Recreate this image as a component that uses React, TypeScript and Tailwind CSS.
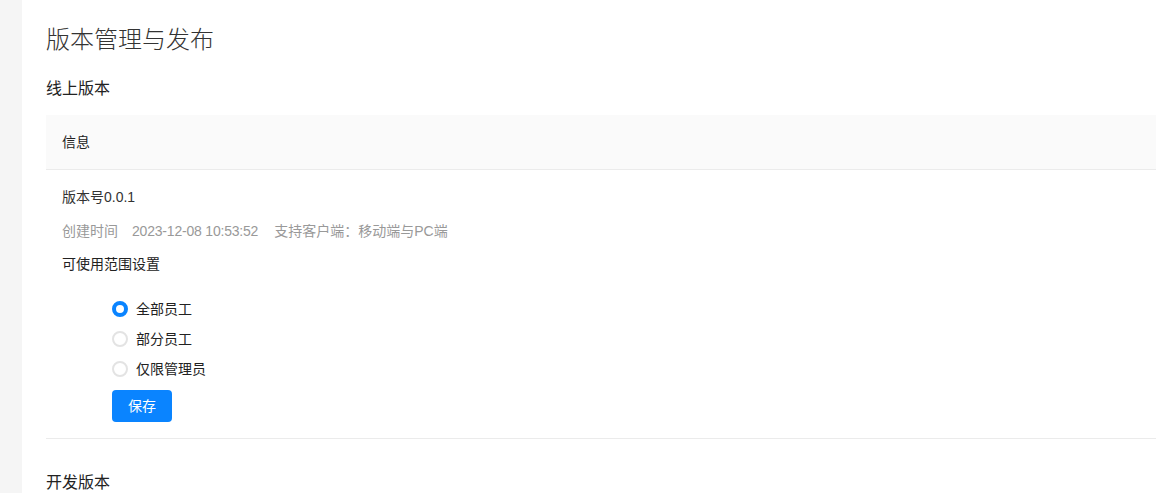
import React, { useState } from "react";

const scopes = ["全部员工", "部分员工", "仅限管理员"];

const App: React.FC = () => {
  const [scope, setScope] = useState(scopes[0]);

  return (
    <div
      className="min-h-screen flex bg-white text-[#333]"
      style={{ fontFamily: '"Liberation Sans", "Noto Sans CJK SC", sans-serif' }}
    >
      {/* Sidebar strip */}
      <div className="w-[22px] shrink-0 bg-[#f5f5f5]" />

      {/* Main */}
      <div className="flex-1 pl-6 pt-6 overflow-hidden">
        <h1 className="text-[24px] leading-[32px] font-light text-[#333]">版本管理与发布</h1>

        <h2 className="mt-[21px] text-[16px] leading-[24px] text-[#222]">线上版本</h2>

        {/* Online version panel */}
        <div className="mt-[14px]">
          <div className="h-[55px] flex items-center px-4 bg-[#fafafa] border-b border-[#ebebeb] text-[14px] text-[#222]">
            信息
          </div>

          <div className="pt-4 pb-4 border-b border-[#ebebeb]">
            <div className="px-4 text-[14px] leading-[22px] text-[#333]">版本号0.0.1</div>
            <div className="px-4 mt-3 flex gap-[14px] text-[14px] leading-[22px] text-[#999]">
              <span>创建时间</span>
              <span className="tracking-[-0.2px]">2023-12-08 10:53:52</span>
              <span className="ml-[2px]">支持客户端：移动端与PC端</span>
            </div>
            <div className="px-4 mt-[11px] text-[14px] leading-[22px] text-[#222]">可使用范围设置</div>

            <div className="pl-[66px] mt-[19px] flex flex-col">
              {scopes.map((s) => (
                <label
                  key={s}
                  className="h-[30px] flex items-center gap-2 cursor-pointer text-[14px] text-[#222]"
                  onClick={() => setScope(s)}
                >
                  <span
                    className={
                      scope === s
                        ? "w-4 h-4 rounded-full border-[4px] border-[#0a84ff] bg-white"
                        : "w-4 h-4 rounded-full border-2 border-[#e3e3e3] bg-white"
                    }
                  />
                  <span>{s}</span>
                </label>
              ))}
              <button className="mt-[6px] w-[60px] h-[32px] rounded bg-[#0a84ff] text-white text-[14px]">
                保存
              </button>
            </div>
          </div>
        </div>

        <h2 className="mt-8 text-[16px] leading-[24px] text-[#222]">开发版本</h2>
      </div>
    </div>
  );
};

export default App;
